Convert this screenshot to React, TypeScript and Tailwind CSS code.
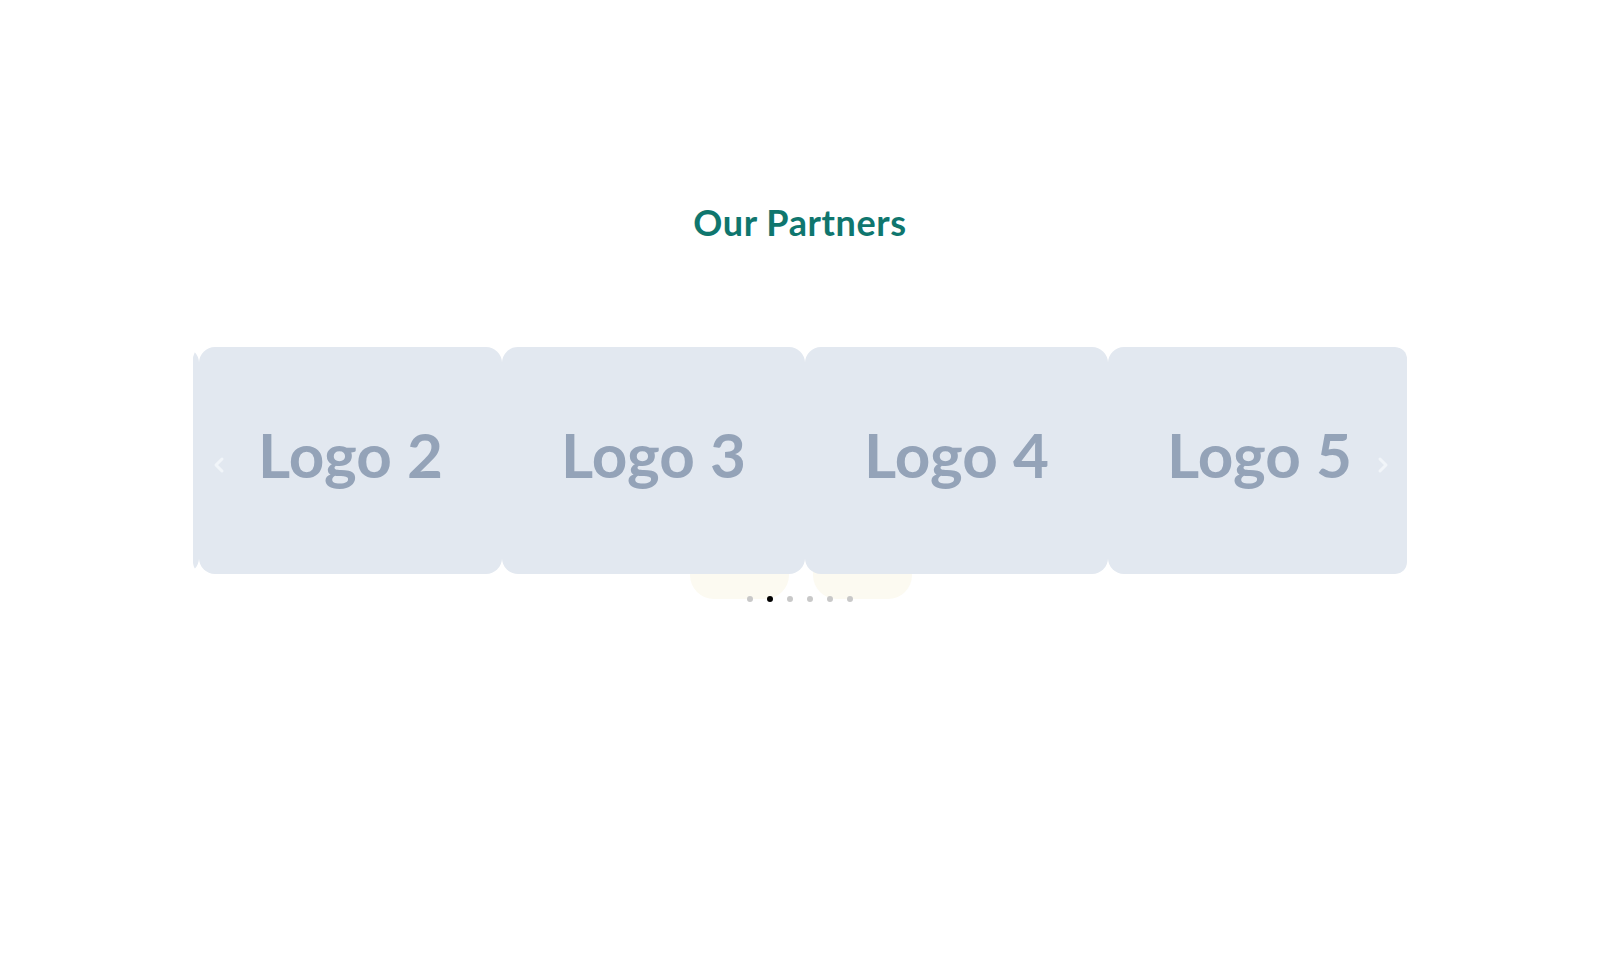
import { ChevronLeft, ChevronRight } from "lucide-react";

const logos = ["Logo 1", "Logo 2", "Logo 3", "Logo 4", "Logo 5", "Logo 6"];

export default function App() {
  return (
    <div className="min-h-screen w-full bg-white" style={{ fontFamily: "Lato, 'Open Sans', sans-serif" }}>
      <section className="flex flex-col items-center pt-[202px]">
        <h2 className="text-[36px] leading-[40px] font-bold text-[#0f766e] tracking-[0.6px]">Our Partners</h2>

        <div className="relative mt-[105px] w-[1214px]">
          {/* cream blobs peeking out under the slides */}
          <div className="absolute left-[497px] top-[120px] h-[132px] w-[99px] rounded-[24px] bg-[#fcfaf1]" />
          <div className="absolute left-[620px] top-[120px] h-[132px] w-[99px] rounded-[24px] bg-[#fcfaf1]" />

          <div className="relative z-10 overflow-hidden rounded-xl">
            <div className="flex ml-[-297px]">
              {logos.map((l, i) => (
                <div
                  key={l}
                  className="flex h-[227px] w-[303px] shrink-0 items-center justify-center rounded-2xl bg-[#e2e8f0] pb-[14px]"
                >
                  {i > 0 && i < logos.length - 1 && (
                    <span className="text-[62px] font-bold leading-none text-[#94a3b8]">{l}</span>
                  )}
                </div>
              ))}
            </div>
            <button className="absolute left-[14px] top-[106px] text-[#f1f5f9]">
              <ChevronLeft className="h-6 w-6" strokeWidth={3} />
            </button>
            <button className="absolute right-[12px] top-[106px] text-[#f1f5f9]">
              <ChevronRight className="h-6 w-6" strokeWidth={3} />
            </button>
          </div>

          <div className="relative z-10 mt-[22px] flex justify-center gap-[14px]">
            {logos.map((l, i) => (
              <span key={l} className={`h-[6px] w-[6px] rounded-full ${i === 1 ? "bg-black" : "bg-[#c8c8c8]"}`} />
            ))}
          </div>
        </div>
      </section>
    </div>
  );
}
